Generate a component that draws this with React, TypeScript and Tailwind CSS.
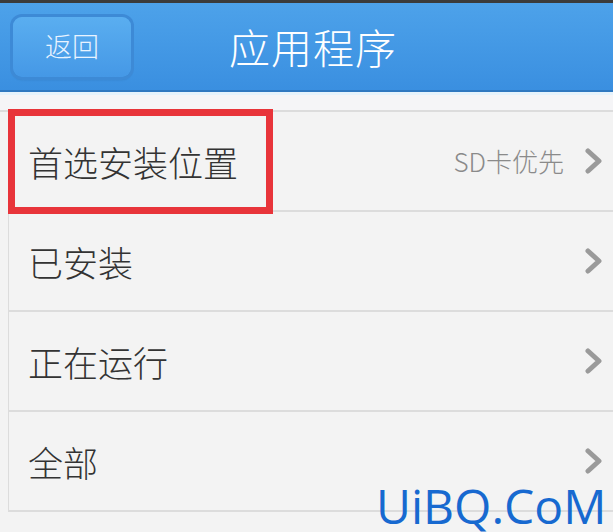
import React from "react"

const rows = [
  { label: "首选安装位置", value: "SD卡优先", boxed: true },
  { label: "已安装" },
  { label: "正在运行" },
  { label: "全部" },
]

const Chevron = () => (
  <svg viewBox="0 0 20 26" className="w-[20px] h-[26px]">
    <path d="M4 3 L15 13 L4 23" fill="none" stroke="#9a9a9a" strokeWidth="5" strokeLinecap="round" strokeLinejoin="round" />
  </svg>
)

export default function App() {
  return (
    <div
      className="w-[613px] h-[532px] overflow-hidden bg-[#f3f3f3] relative"
      style={{ fontFamily: '"Noto Sans CJK SC", "Liberation Sans", sans-serif' }}
    >
      {/* header */}
      <div className="h-[3px] bg-[#3b3b3b]" />
      <div className="h-[89px] bg-gradient-to-b from-[#4da2ea] to-[#3a8fe0] flex items-center px-[13px] border-b-[2px] border-[#2f78c0]">
        <div className="w-[118px] h-[60px] rounded-[9px] bg-gradient-to-b from-[#5aaef0] to-[#4598e6] shadow-[0_0_0_3px_#3d8ad6,0_2px_3px_rgba(0,0,0,0.25)] flex items-center justify-center text-[27px] font-light text-[#e8f3ff]">
          返回
        </div>
        <div className="ml-[98px] text-[41px] font-light text-white leading-none tracking-[1px]">应用程序</div>
      </div>
      <div className="h-[3px] bg-[#e6f3fc]" />
      <div className="h-[17px] bg-[#f5f5f7] border-b-[2px] border-[#dcdcdc]" />

      {/* list */}
      <div className="ml-[8px] border-l border-[#dcdcdc]">
        {rows.map((r) => (
          <div key={r.label} className="h-[100px] flex items-center border-b-[2px] border-[#dcdcdc] pr-[9px] relative">
            <span className="ml-[19px] text-[35px] font-light text-[#333] leading-none">{r.label}</span>
            <div className="ml-auto flex items-center gap-[20px]">
              {r.value && <span className="text-[26px] font-light text-[#8a8a8a] leading-none">{r.value}</span>}
              <Chevron />
            </div>
            {r.boxed && (
              <div className="absolute left-[-1px] top-[-3px] w-[265px] h-[105px] border-[7px] border-[#e8343a]" />
            )}
          </div>
        ))}
      </div>

      {/* watermark */}
      <div
        className="absolute left-[376px] top-[482px] text-[48px] text-[#1769d0] leading-none"
        style={{ fontFamily: '"Open Sans", "Liberation Sans", sans-serif' }}
      >
        UiBQ.CoM
      </div>
    </div>
  )
}
